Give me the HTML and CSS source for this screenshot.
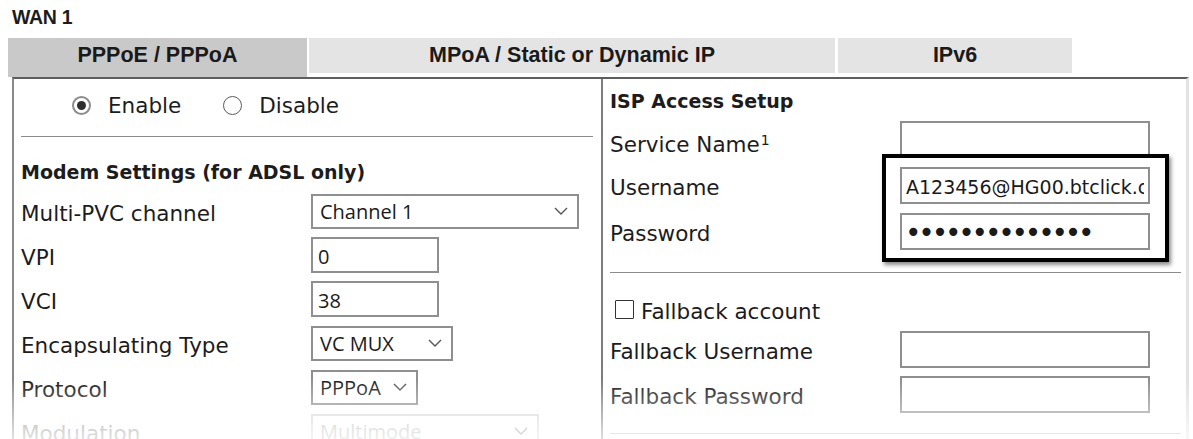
FILE: index.html
```html
<!DOCTYPE html>
<html lang="en">
<head>
<meta charset="utf-8">
<title>WAN 1</title>
<link rel="stylesheet" href="styles.css">
</head>
<body>
<div class="page">
  <h1 class="title">WAN 1</h1>
  <div class="tabs">
    <div class="tab tab-pppoe active">PPPoE / PPPoA</div>
    <div class="tab tab-mpoa">MPoA / Static or Dynamic IP</div>
    <div class="tab tab-ipv6">IPv6</div>
  </div>
  <div class="panel">
    <div class="col col-left">
      <div class="radios">
        <label class="radio"><input type="radio" name="wan" checked><span>Enable</span></label>
        <label class="radio"><input type="radio" name="wan"><span>Disable</span></label>
      </div>
      <hr class="rule">
      <h2 class="heading modem-heading">Modem Settings (for ADSL only)</h2>
      <div class="form-grid">
        <span class="label">Multi-PVC channel</span>
        <select class="ctl sel sel-channel"><option>Channel 1</option></select>
        <span class="label">VPI</span>
        <input class="ctl txt txt-short" type="text" value="0">
        <span class="label">VCI</span>
        <input class="ctl txt txt-short" type="text" value="38">
        <span class="label">Encapsulating Type</span>
        <select class="ctl sel sel-encap"><option>VC MUX</option></select>
        <span class="label">Protocol</span>
        <select class="ctl sel sel-proto"><option>PPPoA</option></select>
        <span class="label disabled">Modulation</span>
        <select class="ctl sel sel-mod" disabled><option>Multimode</option></select>
      </div>
    </div>
    <div class="col col-right">
      <h2 class="heading isp-heading">ISP Access Setup</h2>
      <div class="form-grid isp-grid">
        <span class="label label-service">Service Name<sup>1</sup></span>
        <input class="ctl txt txt-long" type="text" value="">
        <span class="label">Username</span>
        <input class="ctl txt txt-long" type="text" value="A123456@HG00.btclick.com">
        <span class="label">Password</span>
        <input class="ctl txt txt-long pw" type="password" value="abcdefghijklmn">
      </div>
      <div class="highlight"></div>
      <hr class="rule rule-right">
      <label class="check"><input type="checkbox"><span>Fallback account</span></label>
      <div class="form-grid fallback-grid">
        <span class="label">Fallback Username</span>
        <input class="ctl txt txt-long" type="text" value="">
        <span class="label">Fallback Password</span>
        <input class="ctl txt txt-long" type="password" value="">
      </div>
      <hr class="rule rule-right rule-bottom">
    </div>
  </div>
  <div class="fade"></div>
</div>
</body>
</html>
```

FILE: styles.css
```css
html, body {
  margin: 0;
  padding: 0;
  background: #fff;
}

.page {
  position: relative;
  width: 1193px;
  height: 439px;
  overflow: hidden;
  font-family: "DejaVu Sans", Verdana, sans-serif;
  color: #1c1c1c;
}

.title {
  margin: 0;
  padding: 8px 0 0 12px;
  height: 29px;
  box-sizing: border-box;
  font-family: "Liberation Sans", Arial, sans-serif;
  font-weight: bold;
  font-size: 19.5px;
  letter-spacing: -0.3px;
  line-height: 18px;
}

/* tab strip */
.tabs {
  display: flex;
  align-items: flex-start;
  margin-top: 9px;
  margin-left: 8px;
  height: 39px;
}

.tab {
  height: 35px;
  display: flex;
  align-items: center;
  justify-content: center;
  background: #e4e4e4;
  font-family: "Liberation Sans", Arial, sans-serif;
  font-weight: bold;
  font-size: 21.5px;
  color: #1a1a1a;
  box-sizing: border-box;
}

.tab.active {
  background: #c9c9c9;
  height: 39px;
  padding-bottom: 4px;
}

.tab-pppoe { width: 299px; }
.tab-mpoa  { width: 526px; margin-left: 2px; }
.tab-ipv6  { width: 234px; margin-left: 3px; }

/* framed panel with two columns */
.panel {
  display: flex;
  margin-left: 12px;
  width: 1177px;
  height: 380px;
  border-top: 2px solid #5e5e5e;
  border-left: 2px solid #8a8a8a;
  border-right: 3px solid #e2e2e2;
  box-sizing: border-box;
}

.col {
  position: relative;
  box-sizing: border-box;
}

.col-left {
  width: 589px;
  padding: 8px 8px 0 7px;
  border-right: 2px solid #7d7d7d;
}

.col-right {
  flex: 1;
  padding: 10px 5px 0 7px;
}

.radios {
  display: flex;
  align-items: center;
  height: 36px;
  padding-left: 51px;
}

.radio {
  display: flex;
  align-items: center;
  margin-right: 42px;
  font-size: 21.5px;
}

.radio input {
  appearance: none;
  -webkit-appearance: none;
  margin: 0 17px 0 0;
  width: 19px;
  height: 19px;
  border: 1.5px solid #5a5a5a;
  border-radius: 50%;
  box-sizing: border-box;
  background: #fff;
  display: grid;
  place-items: center;
}

.radio input:checked {
  border: 2.5px solid #8c8c8c;
}

.radio input:checked::after {
  content: "";
  width: 9px;
  height: 9px;
  border-radius: 50%;
  background: #2e2e2e;
}

.rule {
  border: 0;
  border-top: 1px solid #8c8c8c;
  margin: 13px 0 0 0;
}

.heading {
  margin: 0;
  font-size: 19px;
  font-weight: bold;
  line-height: 24px;
}

.modem-heading {
  margin-top: 23px;
}

.isp-heading {
  height: 24px;
}

.form-grid {
  display: grid;
  grid-template-columns: 290px auto;
  grid-auto-rows: 36px;
  row-gap: 8px;
  align-items: center;
  justify-items: start;
  margin-top: 9px;
}

.label {
  font-size: 21.5px;
  padding-top: 4px;
  white-space: nowrap;
}

.label-service {
  padding-top: 9px;
}

.label sup {
  font-size: 14px;
  vertical-align: 7px;
  line-height: 0;
  margin-left: 1px;
}

.label.disabled {
  color: #8a8a8a;
}

.ctl {
  box-sizing: border-box;
  margin: 0;
  height: 36px;
  border: 2px solid #8f8f8f;
  background: #fff;
  color: #1a1a1a;
  font-family: "Open Sans", "Noto Sans", sans-serif;
  font-size: 20px;
  outline: none;
}

.txt {
  padding: 2px 6px 0 5px;
}

.txt-short { width: 128px; }

.txt-long {
  width: 250px;
  height: 37px;
  font-family: "DejaVu Sans", Verdana, sans-serif;
  font-size: 19px;
  padding: 2px 4px 0 4px;
}

.pw {
  font-size: 28px;
  letter-spacing: -3.2px;
  padding-left: 3px;
}

.sel {
  appearance: none;
  -webkit-appearance: none;
  height: 35px;
  padding: 0 30px 0 7px;
  background-image: url("data:image/svg+xml,%3Csvg xmlns='http://www.w3.org/2000/svg' width='14' height='8' viewBox='0 0 14 8'%3E%3Cpath d='M1 1l6 6 6-6' fill='none' stroke='%23555' stroke-width='1.4'/%3E%3C/svg%3E");
  background-repeat: no-repeat;
  background-position: right 9px center;
}

.sel-channel { width: 268px; }
.sel-encap   { width: 142px; }
.sel-proto   { width: 107px; }
.sel-mod     { width: 228px; color: #9a9a9a; border-color: #c4c4c4; }

.isp-grid {
  margin-top: 8px;
  row-gap: 9px;
  grid-auto-rows: 37px;
}

/* black outline drawn around the login fields */
.highlight {
  position: absolute;
  left: 279px;
  top: 75px;
  width: 287px;
  height: 108px;
  border: 4px solid #000;
  box-sizing: border-box;
  box-shadow: 2px 3px 4px rgba(0, 0, 0, 0.45);
  pointer-events: none;
}

.rule-right {
  margin: 22px 0 0 0;
}

.check {
  display: flex;
  align-items: center;
  margin-top: 26px;
  margin-left: 5px;
  font-size: 21.5px;
  height: 24px;
}

.check input {
  appearance: none;
  -webkit-appearance: none;
  margin: 0 7px 0 0;
  width: 19px;
  height: 19px;
  border: 1.5px solid #333;
  border-radius: 1px;
  background: #fff;
  position: relative;
  top: -2px;
}

.fallback-grid {
  margin-top: 8px;
  grid-auto-rows: 37px;
}

.rule-bottom {
  margin-top: 20px;
  border-top-color: #b0b0b0;
}

/* the lower edge of the page dissolves into white */
.fade {
  position: absolute;
  left: 0;
  right: 0;
  bottom: 0;
  height: 60px;
  background: linear-gradient(to bottom, rgba(255,255,255,0) 0%, rgba(255,255,255,0.35) 45%, rgba(255,255,255,0.75) 100%);
  pointer-events: none;
}
```
